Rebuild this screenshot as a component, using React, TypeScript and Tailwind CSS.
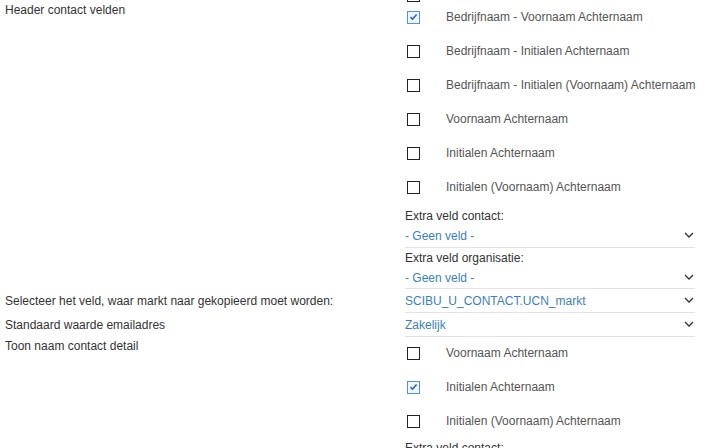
import React from "react";

function Box({ checked }: { checked?: boolean }) {
  if (checked) {
    return (
      <div className="w-[13px] h-[13px] border border-[#4f93d8] bg-[#eef5fc] flex items-center justify-center">
        <svg width="9" height="8" viewBox="0 0 9 8">
          <path d="M1.5 4.2 L3.6 6.2 L7.6 1.6" fill="none" stroke="#2a64ae" strokeWidth="1.6" />
        </svg>
      </div>
    );
  }
  return <div className="w-[13px] h-[13px] border border-[#222] bg-white" />;
}

function CheckRow({ label, checked }: { label: string; checked?: boolean }) {
  return (
    <div className="h-[34px] flex items-center">
      <div className="w-[41px] shrink-0 pl-[2px] flex">
        <Box checked={checked} />
      </div>
      <span className="text-[#555] leading-[20px] whitespace-nowrap">{label}</span>
    </div>
  );
}

function Chevron() {
  return (
    <svg width="10" height="6" viewBox="0 0 10 6" className="mr-[1px] -mt-[2px]">
      <path d="M1 1 L5 5 L9 1" fill="none" stroke="#333" strokeWidth="1.3" />
    </svg>
  );
}

function Select({ value, extra }: { value: string; extra?: string }) {
  return (
    <div className={"flex items-center justify-between border-b border-[#e3e3e3] " + (extra ?? "")}>
      <span className="leading-[20px] text-[#3a7fc1]">{value}</span>
      <Chevron />
    </div>
  );
}

export default function App() {
  return (
    <div className="w-[719px] h-[448px] overflow-hidden bg-white text-[12px] text-[#333] font-['Liberation_Sans',Arial,sans-serif]">
      <div className="grid grid-cols-[400px_290px] pl-[5px]">
        {/* Row 1 */}
        <div className="leading-[20px]">Header contact velden</div>
        <div>
          <div className="-mt-[11px] pl-[2px] h-[13px]">
            <Box />
          </div>
          <div className="-mt-[2px]">
            <CheckRow label="Bedrijfnaam - Voornaam Achternaam" checked />
            <CheckRow label="Bedrijfnaam - Initialen Achternaam" />
            <CheckRow label="Bedrijfnaam - Initialen (Voornaam) Achternaam" />
            <CheckRow label="Voornaam Achternaam" />
            <CheckRow label="Initialen Achternaam" />
            <CheckRow label="Initialen (Voornaam) Achternaam" />
          </div>
          <div className="mt-[2px] leading-[20px]">Extra veld contact:</div>
          <Select value="- Geen veld -" extra="pb-[1px]" />
          <div className="leading-[20px]">Extra veld organisatie:</div>
          <Select value="- Geen veld -" />
        </div>

        {/* Row 2 */}
        <div className="pt-[2px] leading-[20px]">Selecteer het veld, waar markt naar gekopieerd moet worden:</div>
        <Select value="SCIBU_U_CONTACT.UCN_markt" extra="pt-[2px] pb-[1px]" />

        {/* Row 3 */}
        <div className="pt-[2px] leading-[20px]">Standaard waarde emailadres</div>
        <Select value="Zakelijk" extra="pt-[2px] pb-[1px]" />

        {/* Row 4 */}
        <div className="pt-[1px] leading-[16px]">Toon naam contact detail</div>
        <div>
          <div className="-mt-[1px]">
            <CheckRow label="Voornaam Achternaam" />
            <CheckRow label="Initialen Achternaam" checked />
            <CheckRow label="Initialen (Voornaam) Achternaam" />
          </div>
          <div className="leading-[20px]">Extra veld contact:</div>
          <Select value="- Geen veld -" />
        </div>
      </div>
    </div>
  );
}
